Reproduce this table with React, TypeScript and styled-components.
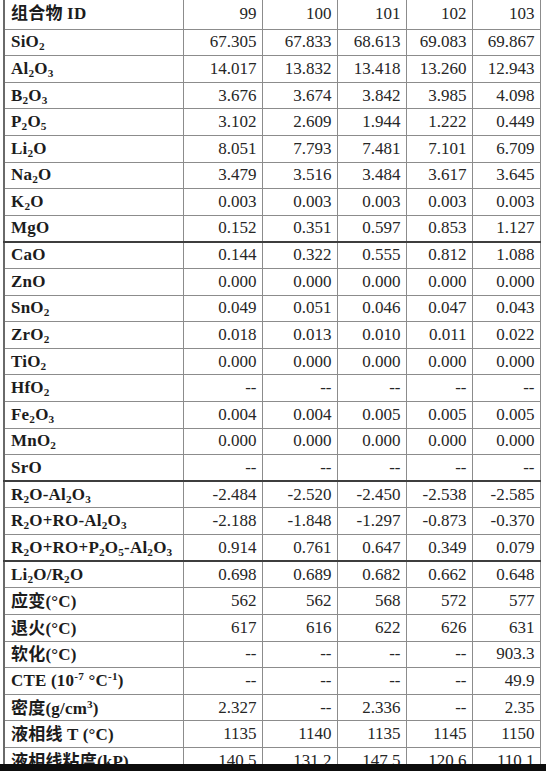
import * as React from 'react';
import styled, { createGlobalStyle } from 'styled-components';

const GlobalStyle = createGlobalStyle`
    html, body {
        margin: 0;
        padding: 0;
        background: #ffffff;
        overflow: hidden;
    }
`;

const Page = styled.div`
    position: relative;
    width: 546px;
    height: 771px;
    overflow: hidden;
    background: #ffffff;
`;

// 表格本体
const Table = styled.table`
    border-collapse: collapse;
    table-layout: fixed;
    width: 537px;
    margin-left: 3px;
    margin-top: -7px;
    font-family: 'Liberation Serif', 'Noto Sans CJK SC', serif;
    font-size: 17px;
    color: #1c1c1c;
    border-left: 2px solid #6a6a6a;
`;

const Row = styled.tr<{ $strong?: boolean; $head?: boolean }>`
    height: ${(p) => (p.$head ? '36px' : '26.62px')};

    td {
        border-bottom: ${(p) => (p.$strong ? '2px solid #3e3e3e' : '1px solid #8c8c8c')};
        vertical-align: ${(p) => (p.$head ? 'bottom' : 'middle')};
        padding-bottom: ${(p) => (p.$head ? '5px' : '0')};
    }
`;

const Label = styled.td`
    border-right: 1px solid #8c8c8c;
    padding: 0 0 0 6px;
    font-weight: bold;
    white-space: nowrap;
    line-height: 20px;
    letter-spacing: 0.2px;
    font-family: 'Liberation Serif', 'Noto Sans CJK SC', serif;

    sub, sup {
        font-size: 0.66em;
        line-height: 0;
    }
    sub {
        vertical-align: -0.25em;
    }
    sup {
        vertical-align: 0.55em;
    }
`;

const Value = styled.td`
    border-right: 1px solid #8c8c8c;
    padding: 0 5px 0 0;
    text-align: right;
    line-height: 20px;
    white-space: nowrap;
    font-family: 'Liberation Serif', serif;
    color: #262626;
`;

const Cjk = styled.span`
    font-family: 'Noto Sans CJK SC', sans-serif;
    font-weight: 700;
`;

// 底部黑边
const BottomEdge = styled.div`
    position: absolute;
    left: 0;
    right: 0;
    bottom: 0;
    height: 7px;
    background: #0d0d0d;
`;

interface DataRow {
    label: React.ReactNode;
    values: string[];
    strong?: boolean;
}

const rows: DataRow[] = [
    { label: <>SiO<sub>2</sub></>, values: ['67.305', '67.833', '68.613', '69.083', '69.867'] },
    { label: <>Al<sub>2</sub>O<sub>3</sub></>, values: ['14.017', '13.832', '13.418', '13.260', '12.943'] },
    { label: <>B<sub>2</sub>O<sub>3</sub></>, values: ['3.676', '3.674', '3.842', '3.985', '4.098'] },
    { label: <>P<sub>2</sub>O<sub>5</sub></>, values: ['3.102', '2.609', '1.944', '1.222', '0.449'] },
    { label: <>Li<sub>2</sub>O</>, values: ['8.051', '7.793', '7.481', '7.101', '6.709'] },
    { label: <>Na<sub>2</sub>O</>, values: ['3.479', '3.516', '3.484', '3.617', '3.645'] },
    { label: <>K<sub>2</sub>O</>, values: ['0.003', '0.003', '0.003', '0.003', '0.003'] },
    { label: <>MgO</>, values: ['0.152', '0.351', '0.597', '0.853', '1.127'], strong: true },
    { label: <>CaO</>, values: ['0.144', '0.322', '0.555', '0.812', '1.088'] },
    { label: <>ZnO</>, values: ['0.000', '0.000', '0.000', '0.000', '0.000'] },
    { label: <>SnO<sub>2</sub></>, values: ['0.049', '0.051', '0.046', '0.047', '0.043'] },
    { label: <>ZrO<sub>2</sub></>, values: ['0.018', '0.013', '0.010', '0.011', '0.022'] },
    { label: <>TiO<sub>2</sub></>, values: ['0.000', '0.000', '0.000', '0.000', '0.000'] },
    { label: <>HfO<sub>2</sub></>, values: ['--', '--', '--', '--', '--'] },
    { label: <>Fe<sub>2</sub>O<sub>3</sub></>, values: ['0.004', '0.004', '0.005', '0.005', '0.005'] },
    { label: <>MnO<sub>2</sub></>, values: ['0.000', '0.000', '0.000', '0.000', '0.000'] },
    { label: <>SrO</>, values: ['--', '--', '--', '--', '--'], strong: true },
    { label: <>R<sub>2</sub>O-Al<sub>2</sub>O<sub>3</sub></>, values: ['-2.484', '-2.520', '-2.450', '-2.538', '-2.585'] },
    { label: <>R<sub>2</sub>O+RO-Al<sub>2</sub>O<sub>3</sub></>, values: ['-2.188', '-1.848', '-1.297', '-0.873', '-0.370'] },
    {
        label: <>R<sub>2</sub>O+RO+P<sub>2</sub>O<sub>5</sub>-Al<sub>2</sub>O<sub>3</sub></>,
        values: ['0.914', '0.761', '0.647', '0.349', '0.079'],
        strong: true,
    },
    { label: <>Li<sub>2</sub>O/R<sub>2</sub>O</>, values: ['0.698', '0.689', '0.682', '0.662', '0.648'] },
    { label: <><Cjk>应变</Cjk>(°C)</>, values: ['562', '562', '568', '572', '577'] },
    { label: <><Cjk>退火</Cjk>(°C)</>, values: ['617', '616', '622', '626', '631'] },
    { label: <><Cjk>软化</Cjk>(°C)</>, values: ['--', '--', '--', '--', '903.3'] },
    { label: <>CTE (10<sup>-7</sup> °C<sup>-1</sup>)</>, values: ['--', '--', '--', '--', '49.9'] },
    { label: <><Cjk>密度</Cjk>(g/cm<sup>3</sup>)</>, values: ['2.327', '--', '2.336', '--', '2.35'] },
    { label: <><Cjk>液相线</Cjk> T (°C)</>, values: ['1135', '1140', '1135', '1145', '1150'] },
    { label: <><Cjk>液相线粘度</Cjk>(kP)</>, values: ['140.5', '131.2', '147.5', '120.6', '110.1'] },
];

const ids = ['99', '100', '101', '102', '103'];

const App: React.FC = () => (
    <Page>
        <GlobalStyle />
        <Table>
            <colgroup>
                <col style={{ width: 179 }} />
                <col style={{ width: 79 }} />
                <col style={{ width: 75 }} />
                <col style={{ width: 69 }} />
                <col style={{ width: 66 }} />
                <col style={{ width: 68 }} />
            </colgroup>
            <tbody>
                <Row $head>
                    <Label>
                        <Cjk>组合物</Cjk> ID
                    </Label>
                    {ids.map((id) => (
                        <Value key={id}>{id}</Value>
                    ))}
                </Row>
                {rows.map((r, i) => (
                    <Row key={i} $strong={r.strong}>
                        <Label>{r.label}</Label>
                        {r.values.map((v, j) => (
                            <Value key={j}>{v}</Value>
                        ))}
                    </Row>
                ))}
            </tbody>
        </Table>
        <BottomEdge />
    </Page>
);

export default App;
